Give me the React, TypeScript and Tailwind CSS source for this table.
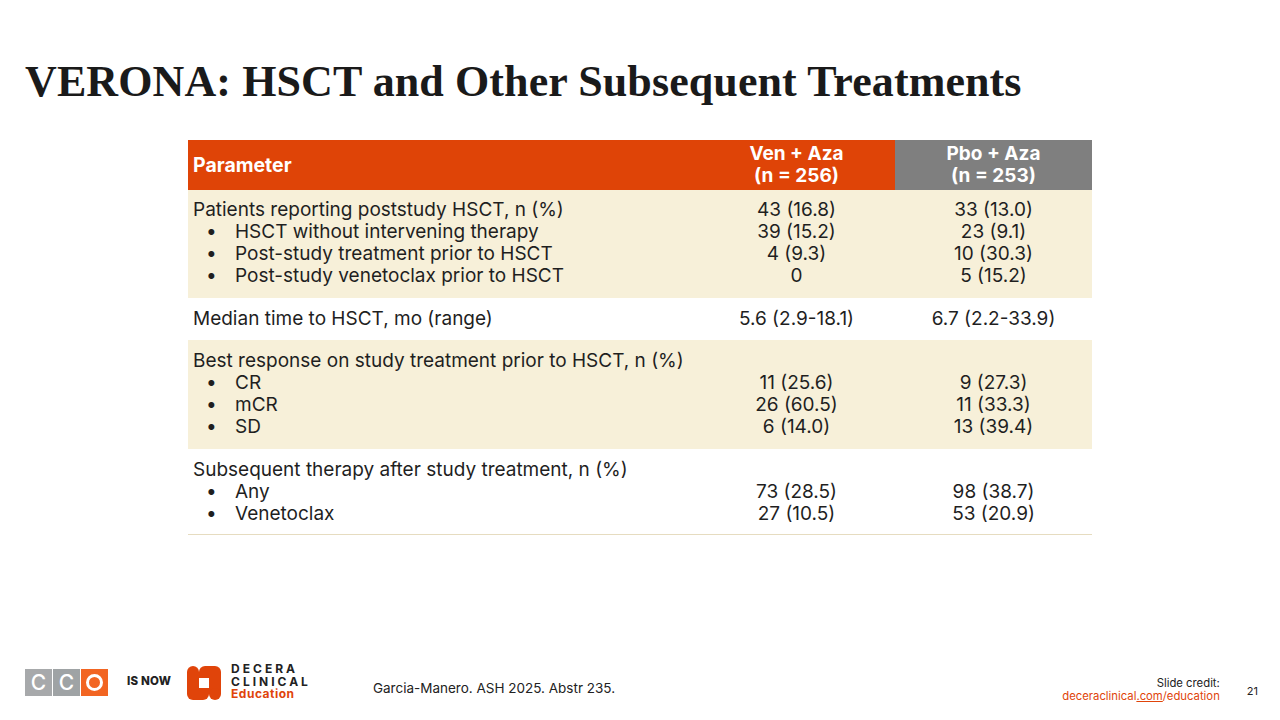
const body = "font-['Inter','Noto_Sans',sans-serif]";

type Row = {
  title: string;
  items: string[];
  ven: string[];
  pbo: string[];
  shade: boolean;
  pad: string;
};

const rows: Row[] = [
  {
    title: 'Patients reporting poststudy HSCT, n (%)',
    items: ['HSCT without intervening therapy', 'Post-study treatment prior to HSCT', 'Post-study venetoclax prior to HSCT'],
    ven: ['43 (16.8)', '39 (15.2)', '4 (9.3)', '0'],
    pbo: ['33 (13.0)', '23 (9.1)', '10 (30.3)', '5 (15.2)'],
    shade: true,
    pad: 'pt-[9px] pb-[11px]',
  },
  {
    title: 'Median time to HSCT, mo (range)',
    items: [],
    ven: ['5.6 (2.9-18.1)'],
    pbo: ['6.7 (2.2-33.9)'],
    shade: false,
    pad: 'py-[10px]',
  },
  {
    title: 'Best response on study treatment prior to HSCT, n (%)',
    items: ['CR', 'mCR', 'SD'],
    ven: ['', '11 (25.6)', '26 (60.5)', '6 (14.0)'],
    pbo: ['', '9 (27.3)', '11 (33.3)', '13 (39.4)'],
    shade: true,
    pad: 'pt-[10px] pb-[11px]',
  },
  {
    title: 'Subsequent therapy after study treatment, n (%)',
    items: ['Any', 'Venetoclax'],
    ven: ['', '73 (28.5)', '27 (10.5)'],
    pbo: ['', '98 (38.7)', '53 (20.9)'],
    shade: false,
    pad: 'pt-[10px] pb-[9px]',
  },
];

function CcoLogo() {
  return (
    <div className="flex gap-[1px] h-[27px]">
      <div className="w-[27px] bg-[#a7a9ab] flex items-center justify-center text-white text-[21px] font-['Inter',sans-serif] font-medium leading-none">C</div>
      <div className="w-[27px] bg-[#9fa3a5] flex items-center justify-center text-white text-[21px] font-['Inter',sans-serif] font-medium leading-none">C</div>
      <div className="w-[27px] bg-[#f26522] flex items-center justify-center">
        <div className="w-[17px] h-[17px] rounded-full border-[3px] border-white" />
      </div>
    </div>
  );
}

// decera mark: square ring with a circle at two corners
function DeceraMark() {
  return (
    <svg width="34" height="34" viewBox="0 0 34 34">
      <g fill="#e0440a">
        <circle cx="6" cy="6" r="6" />
        <path d="M18 0H28A6 6 0 0 1 34 6V12H12V6A6 6 0 0 1 18 0Z" />
        <rect x="0" y="6" width="12" height="22" />
        <rect x="22" y="6" width="12" height="22" />
        <path d="M0 22H22V28A6 6 0 0 1 16 34H6A6 6 0 0 1 0 28Z" />
        <circle cx="28" cy="28" r="6" />
      </g>
    </svg>
  );
}

export default function App() {
  return (
    <div className={`w-[1280px] h-[720px] bg-white flex flex-col text-[#1f1f1f] ${body}`}>
      <h1 className="pt-[60px] pl-[25px] text-[44px] leading-[44px] font-bold tracking-[0.1px] font-['Liberation_Serif','Times_New_Roman',serif] text-[#1a1a1a]">
        VERONA: HSCT and Other Subsequent Treatments
      </h1>

      <div className="ml-[188px] mt-[36px] w-[904px] text-[19px] leading-[22px]">
        <div className="grid grid-cols-[510px_197px_197px] h-[50px] text-white font-bold">
          <div className="bg-[#df4407] flex items-center pl-[5px] text-[19.5px]">Parameter</div>
          <div className="bg-[#df4407] flex flex-col items-center justify-center">
            <span>Ven + Aza</span>
            <span>(n = 256)</span>
          </div>
          <div className="bg-[#7f7f7f] flex flex-col items-center justify-center">
            <span>Pbo + Aza</span>
            <span>(n = 253)</span>
          </div>
        </div>

        {rows.map((r) => (
          <div
            key={r.title}
            className={`grid grid-cols-[510px_197px_197px] ${r.pad} ${r.shade ? 'bg-[#f7f0d9]' : 'bg-white'}`}
          >
            <div className="pl-[5px]">
              <div>{r.title}</div>
              {r.items.map((it) => (
                <div key={it} className="flex">
                  <span className="w-[42px] pl-[13px]">•</span>
                  <span>{it}</span>
                </div>
              ))}
            </div>
            <div className="flex flex-col items-center">
              {r.ven.map((v, i) => (
                <div key={i} className="h-[22px]">{v}</div>
              ))}
            </div>
            <div className="flex flex-col items-center">
              {r.pbo.map((v, i) => (
                <div key={i} className="h-[22px]">{v}</div>
              ))}
            </div>
          </div>
        ))}
        <div className="h-[1px] bg-[#e6dcc0]" />
      </div>

      <div className="mt-auto mb-[16px] h-[44px] flex items-center pl-[25px] pr-[22px]">
        <CcoLogo />
        <span className="ml-[19px] text-[11.5px] font-extrabold tracking-[0.2px] text-[#222]">IS NOW</span>
        <div className="ml-[16px] mt-[1px]">
          <DeceraMark />
        </div>
        <div className="ml-[10px] flex flex-col text-[12px] leading-[12.5px] font-bold">
          <span className="tracking-[3px] text-[#222]">DECERA</span>
          <span className="tracking-[3px] text-[#222]">CLINICAL</span>
          <span className="text-[#e0440a] tracking-[0.5px]">Education</span>
        </div>
        <span className="ml-[62px] mt-[12px] text-[13.5px] text-[#222]">Garcia-Manero. ASH 2025. Abstr 235.</span>
        <div className="ml-auto mt-[16px] flex flex-col items-end text-[11.3px] leading-[13px]">
          <span className="text-[#222]">Slide credit:</span>
          <span className="text-[#e0440a]">
            deceraclinical<span className="underline">.com</span>/education
          </span>
        </div>
        <span className="ml-[27px] mt-[18px] text-[11px] text-[#222]">21</span>
      </div>
    </div>
  );
}
